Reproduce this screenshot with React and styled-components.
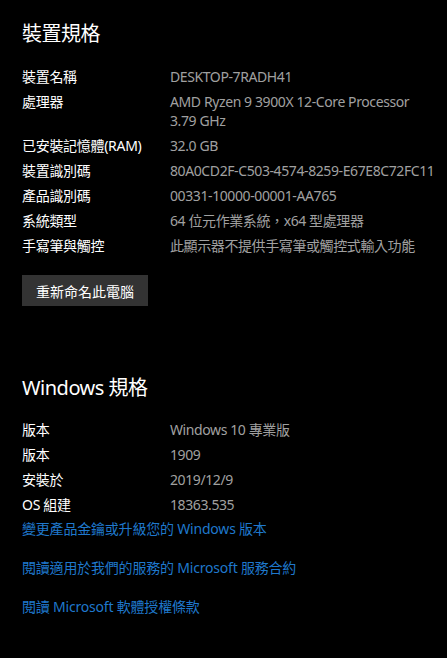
import React from "react";
import styled, { createGlobalStyle } from "styled-components";

const Global = createGlobalStyle`
  html, body { margin: 0; padding: 0; background: #000; }
  body { font-family: "Noto Sans", "Noto Sans CJK TC", sans-serif; }
`;

const Page = styled.div`
  padding: 20px 22px 0 22px;
  background: #000;
  min-height: 658px;
  box-sizing: border-box;
  color: #fff;
`;

const Title = styled.h2`
  margin: 0;
  font-size: 20px;
  line-height: 28px;
  font-weight: 400;
  letter-spacing: -0.5px;
  color: #fff;
`;

const Specs = styled.dl`
  margin: ${(p) => p.$top}px 0 0 0;
  display: grid;
  grid-template-columns: 148px 1fr;
  row-gap: 6px;
  font-size: 14px;
  line-height: 19px;
`;

const Label = styled.dt`
  margin: 0;
  color: #fff;
  letter-spacing: -0.3px;
`;

const Value = styled.dd`
  margin: 0;
  color: #a0a0a0;
  white-space: nowrap;
  letter-spacing: -0.4px;
`;

const Button = styled.button`
  margin-top: 20px;
  width: 126px;
  height: 31px;
  border: none;
  background: #333333;
  color: #fff;
  font-family: inherit;
  font-size: 14px;
  padding: 0;
  cursor: pointer;
`;

const Section = styled.section`
  margin-top: ${(p) => p.$top}px;
`;

const Links = styled.div`
  display: flex;
  flex-direction: column;
  gap: 20px;
  margin-top: 5px;
`;

const Link = styled.a`
  color: #1f78cc;
  font-size: 14px;
  line-height: 19px;
  letter-spacing: -0.2px;
  text-decoration: none;
`;

const device = [
  ["裝置名稱", "DESKTOP-7RADH41"],
  ["處理器", "AMD Ryzen 9 3900X 12-Core Processor\n3.79 GHz"],
  ["已安裝記憶體(RAM)", "32.0 GB"],
  ["裝置識別碼", "80A0CD2F-C503-4574-8259-E67E8C72FC11"],
  ["產品識別碼", "00331-10000-00001-AA765"],
  ["系統類型", "64 位元作業系統，x64 型處理器"],
  ["手寫筆與觸控", "此顯示器不提供手寫筆或觸控式輸入功能"],
];

const windows = [
  ["版本", "Windows 10 專業版"],
  ["版本", "1909"],
  ["安裝於", "2019/12/9"],
  ["OS 組建", "18363.535"],
];

function SpecList({ items, top }) {
  return (
    <Specs $top={top}>
      {items.map(([k, v], i) => (
        <React.Fragment key={i}>
          <Label>{k}</Label>
          <Value>
            {v.split("\n").map((line, j) => (
              <div key={j}>{line}</div>
            ))}
          </Value>
        </React.Fragment>
      ))}
    </Specs>
  );
}

export default function App() {
  return (
    <>
      <Global />
      <Page>
        <Title>裝置規格</Title>
        <SpecList items={device} top={19} />
        <Button>重新命名此電腦</Button>
        <Section $top={68}>
          <Title>Windows 規格</Title>
          <SpecList items={windows} top={18} />
          <Links>
            <Link href="#">變更產品金鑰或升級您的 Windows 版本</Link>
            <Link href="#">閱讀適用於我們的服務的 Microsoft 服務合約</Link>
            <Link href="#">閱讀 Microsoft 軟體授權條款</Link>
          </Links>
        </Section>
      </Page>
    </>
  );
}
